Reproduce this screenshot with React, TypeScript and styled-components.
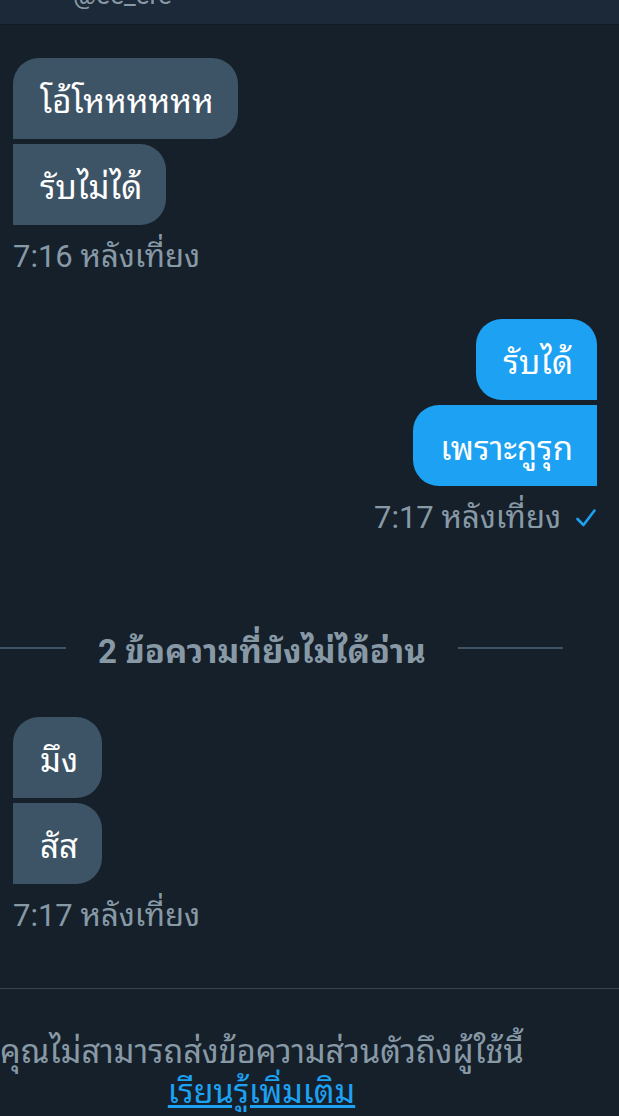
import React from "react";
import styled, { createGlobalStyle } from "styled-components";

const GlobalStyle = createGlobalStyle`
  html, body {
    margin: 0;
    padding: 0;
    background: #15202b;
  }
  body {
    font-family: Roboto, "Noto Sans Thai Looped", "Noto Sans Thai", "Noto Sans", sans-serif;
    -webkit-font-smoothing: antialiased;
  }
`;

type Side = "left" | "right";
type Pos = "first" | "last";

const Header = styled.div`
  height: 24px;
  background: #1c2938;
  border-bottom: 1px solid #131b24;
  padding-left: 73px;
  overflow: hidden;
`;

const Handle = styled.div`
  font-size: 26px;
  line-height: 26px;
  margin-top: -18px;
  color: #8899a6;
`;

const Group = styled.div<{ $side: Side; $top: number }>`
  display: flex;
  flex-direction: column;
  align-items: ${(p) => (p.$side === "left" ? "flex-start" : "flex-end")};
  gap: 5px;
  margin-top: ${(p) => p.$top}px;
  padding: 0 22px 0 13px;
`;

const radius = (side: Side, pos: Pos) => {
  const r = "26px";
  if (side === "left") {
    return pos === "first" ? `${r} ${r} ${r} 0` : `0 ${r} ${r} 0`;
  }
  return pos === "first" ? `${r} ${r} 0 ${r}` : `${r} 0 0 ${r}`;
};

const Bubble = styled.div<{ $side: Side; $pos: Pos }>`
  height: 81px;
  box-sizing: border-box;
  display: flex;
  align-items: center;
  padding: 0 24px 0 27px;
  font-size: 33px;
  color: #ffffff;
  background: ${(p) => (p.$side === "left" ? "#3d5466" : "#1da1f2")};
  border-radius: ${(p) => radius(p.$side, p.$pos)};
`;

const Stamp = styled.div`
  display: flex;
  align-items: center;
  gap: 14px;
  margin-top: 9px;
  font-size: 31px;
  line-height: 36px;
  color: #8899a6;
  white-space: nowrap;
`;

const Divider = styled.div`
  display: flex;
  align-items: center;
  margin-top: 96px;
  height: 32px;
`;

const Rule = styled.div<{ $w: number }>`
  flex: none;
  width: ${(p) => p.$w}px;
  height: 2px;
  background: #3d5466;
`;

const DividerText = styled.div`
  margin: 0 32px;
  font-size: 33px;
  font-weight: 700;
  color: #8899a6;
  white-space: nowrap;
`;

const Footer = styled.div`
  margin-top: 54px;
  border-top: 1px solid #38444d;
  padding-top: 43px;
`;

const FooterInner = styled.div`
  width: 523px;
  text-align: center;
  font-size: 32.5px;
  line-height: 40px;
  color: #8899a6;
  white-space: nowrap;
`;

const Link = styled.a`
  color: #1da1f2;
  text-decoration: underline;
`;

const Check = () => (
  <svg width="22" height="22" viewBox="0 0 22 22">
    <polyline points="2.5,12 8.5,18 19.5,3.5" fill="none" stroke="#1da1f2" strokeWidth="2.6" strokeLinecap="round" strokeLinejoin="round" />
  </svg>
);

export default function App() {
  return (
    <>
      <GlobalStyle />
      <Header>
        <Handle>@ee_ere</Handle>
      </Header>

      <Group $side="left" $top={33}>
        <Bubble $side="left" $pos="first">โอ้โหหหหหห</Bubble>
        <Bubble $side="left" $pos="last">รับไม่ได้</Bubble>
        <Stamp>7:16 หลังเที่ยง</Stamp>
      </Group>

      <Group $side="right" $top={44}>
        <Bubble $side="right" $pos="first">รับได้</Bubble>
        <Bubble $side="right" $pos="last">เพราะกูรุก</Bubble>
        <Stamp>
          7:17 หลังเที่ยง <Check />
        </Stamp>
      </Group>

      <Divider>
        <Rule $w={66} />
        <DividerText>2 ข้อความที่ยังไม่ได้อ่าน</DividerText>
        <Rule $w={105} />
      </Divider>

      <Group $side="left" $top={53}>
        <Bubble $side="left" $pos="first">มึง</Bubble>
        <Bubble $side="left" $pos="last">สัส</Bubble>
        <Stamp>7:17 หลังเที่ยง</Stamp>
      </Group>

      <Footer>
        <FooterInner>
          คุณไม่สามารถส่งข้อความส่วนตัวถึงผู้ใช้นี้
          <br />
          <Link href="#">เรียนรู้เพิ่มเติม</Link>
        </FooterInner>
      </Footer>
    </>
  );
}
